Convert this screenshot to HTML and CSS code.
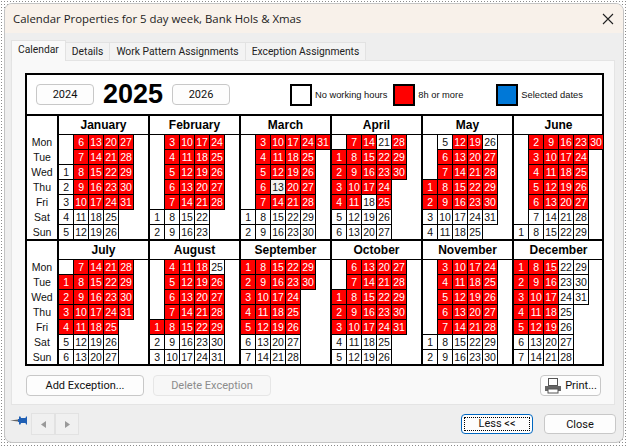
FILE: index.html
```html
<!DOCTYPE html>
<html lang="en">
<head>
    <meta charset="UTF-8">
    <title>Calendar Properties</title>
    <link rel="stylesheet" href="styles.css">
</head>
<body>
    <div class="window">
        <div class="titlebar">
            <span class="title">Calendar Properties for 5 day week, Bank Hols &amp; Xmas</span>
            <svg class="close-icon" width="12" height="12" viewBox="0 0 12 12"><path d="M1 1L11 11M11 1L1 11" stroke="#222" stroke-width="1.1" fill="none"/></svg>
        </div>

        <div class="tabs">
            <div class="tab active">Calendar</div>
            <div class="tab">Details</div>
            <div class="tab">Work Pattern Assignments</div>
            <div class="tab">Exception Assignments</div>
        </div>

        <div class="tab-page">
            <div class="calendar">
                <div class="cal-top">
                    <button class="btn year-btn">2024</button>
                    <div class="year">2025</div>
                    <button class="btn year-btn">2026</button>
                    <div class="legend">
                        <span class="swatch"></span><span class="legend-label label-none">No working hours</span>
                        <span class="swatch red"></span><span class="legend-label label-8h">8h or more</span>
                        <span class="swatch blue"></span><span class="legend-label">Selected dates</span>
                    </div>
                </div>
                <div class="year-grid" id="yearGrid"></div>
            </div>

            <div class="page-actions">
                <button class="btn action-btn">Add Exception...</button>
                <button class="btn action-btn disabled">Delete Exception</button>
                <button class="btn print-btn">
                    <svg width="18" height="17" viewBox="0 0 18 17">
                        <rect x="4.5" y="1.5" width="9" height="7" fill="#fff" stroke="#555"/>
                        <path d="M1 9h16v5H1z" fill="#666"/>
                        <rect x="4" y="12" width="10" height="4" fill="#fff" stroke="#555"/>
                    </svg>
                    Print...
                </button>
            </div>
        </div>

        <div class="footer">
            <svg class="pin" width="17" height="9" viewBox="0 0 17 9">
                <path d="M0 4.5L8 3.6V5.4z" fill="#666"/>
                <path d="M8 3h1V0.5h1.5L11 2h4.5L16 0.5h1V8.500h-1L15.500 7H11L10.500 8.500H9V6H8z" fill="#1f5fb4"/>
            </svg>
            <div class="nav-btns">
                <span class="nav-btn"><svg width="5" height="7" viewBox="0 0 5 7"><path d="M5 0V7L0 3.500z" fill="#999"/></svg></span>
                <span class="nav-btn"><svg width="5" height="7" viewBox="0 0 5 7"><path d="M0 0V7L5 3.500z" fill="#999"/></svg></span>
            </div>
            <button class="btn footer-btn focused"><span>Less &lt;&lt;</span></button>
            <button class="btn footer-btn">Close</button>
        </div>
    </div>

    <script src="calendar.js"></script>
</body>
</html>
```
FILE: styles.css
```css
* {
    box-sizing: border-box;
}
html, body {
    margin: 0;
    height: 100%;
}
body {
    width: 627px;
    height: 446px;
    overflow: hidden;
    padding: 3px 3px 3px 4px;
    background-color: #fff;
    background-image: radial-gradient(#8a8a8a 0.6px, transparent 0.7px);
    background-size: 3px 3px;
    font-family: "Liberation Sans", Arial, sans-serif;
    color: #000;
}
.window {
    height: 440px;
    background: #eeeeee;
    border: 1px solid #c4c4c4;
    border-radius: 8px;
    overflow: hidden;
}
.titlebar {
    height: 29px;
    background: #f8f1ea;
    display: flex;
    align-items: center;
    justify-content: space-between;
    padding: 0 9px 0 8px;
}
.title {
    font-family: "Open Sans", sans-serif;
    font-size: 11.400px;
    color: #1c1c1c;
}
.tabs {
    display: flex;
    align-items: flex-end;
    height: 27px;
    padding-left: 6px;
}
.tab {
    height: 18px;
    padding: 0 6px;
    background: #f3f3f3;
    border: 1px solid #e2e2e2;
    border-bottom: none;
    font-family: Roboto, sans-serif;
    font-size: 10.300px;
    line-height: 18px;
    color: #222;
    margin-right: -1px;
}
.tab.active {
    position: relative;
    z-index: 1;
    height: 21px;
    background: #f9f9f9;
    line-height: 18px;
    margin-bottom: -1px;
}
.tab-page {
    height: 345px;
    margin: 0 8px 0 6px;
    padding: 12px 0 0 13px;
    background: #f9f9f9;
    border: 1px solid #e4e4e4;
}
.calendar {
    width: 579px;
    height: 293px;
    background: #fff;
    border: 2px solid #000;
}
.cal-top {
    height: 41px;
    display: flex;
    align-items: center;
    padding: 0 0 0 9px;
    border-bottom: 2px solid #000;
}
.btn {
    font-family: Roboto, sans-serif;
    background: #fdfdfd;
    border: 1px solid #c8c8c8;
    border-radius: 4px;
    font-size: 11px;
    color: #111;
    padding: 0;
}
.year-btn {
    width: 58px;
    height: 21px;
}
.year {
    width: 78px;
    text-align: center;
    font-size: 27px;
    font-weight: bold;
}
.legend {
    display: flex;
    align-items: center;
    margin-left: 60px;
}
.swatch {
    width: 22px;
    height: 22px;
    border: 2px solid #000;
    background: #fff;
}
.swatch.red {
    background: #ff0000;
}
.swatch.blue {
    background: #0078d7;
}
.legend-label {
    font-size: 9.300px;
    margin-left: 3px;
    color: #111;
}
.label-none {
    margin-right: 6px;
}
.label-8h {
    margin-right: 33px;
}
.year-grid {
    display: grid;
    grid-template-columns: 30px repeat(6, 91px);
    grid-template-rows: 123px 125px;
}
.days {
    display: grid;
    grid-template-rows: repeat(7, 15px);
    padding-top: 19px;
    font-size: 10.500px;
    color: #111;
}
.days div {
    text-align: center;
    line-height: 15px;
}
.month {
    border-left: 2px solid #000;
}
.band-2 {
    border-top: 2px solid #000;
}
.month-name {
    height: 19px;
    border-bottom: 1px solid #000;
    text-align: center;
    font-size: 12px;
    font-weight: bold;
    line-height: 18px;
}
.cells {
    display: grid;
    grid-template-columns: repeat(6, 14px);
    grid-template-rows: repeat(7, 14px);
    gap: 1px;
    grid-auto-flow: column;
}
.cell {
    font-size: 10.500px;
    line-height: 14px;
    text-align: center;
    letter-spacing: -0.2px;
}
.cell.day {
    outline: 1px solid #000;
    background: #fff;
    color: #111;
}
.cell.work {
    background: #ff0000;
    color: #fff;
}
.cell.hover {
    background: #f0f0f0;
    color: #111;
}
.page-actions {
    display: flex;
    align-items: center;
    gap: 9px;
    margin-top: 9px;
    padding-left: 1px;
}
.action-btn {
    width: 118px;
    height: 21px;
}
.action-btn.disabled {
    background: #f7f7f7;
    border-color: #e6e6e6;
    color: #8c8c8c;
}
.print-btn {
    width: 61px;
    height: 21px;
    margin-left: 260px;
    display: flex;
    align-items: center;
    justify-content: center;
    gap: 3px;
}
.footer {
    display: flex;
    align-items: center;
    height: 38px;
    padding: 0 7px 0 5px;
}
.pin {
    margin-top: -7px;
}
.nav-btns {
    display: flex;
    margin-left: 4px;
}
.nav-btn {
    width: 24px;
    height: 22px;
    display: flex;
    align-items: center;
    justify-content: center;
    border: 1px solid #e2e2e2;
    background: #f0f0f0;
}
.footer-btn {
    width: 72px;
    height: 20px;
}
.footer-btn.focused {
    margin-left: auto;
    margin-right: 11px;
    border: 1px solid #0067c0;
    padding: 2px;
}
.footer-btn.focused span {
    display: block;
    height: 100%;
    border: 1px dotted #000;
    line-height: 12px;
}
```
FILE: calendar.js
```js
// 2025, weeks start on Monday. Weekdays listed here have no working hours.
const monthNames = ['January', 'February', 'March', 'April', 'May', 'June', 'July',
    'August', 'September', 'October', 'November', 'December'];
const dayNames = ['Mon', 'Tue', 'Wed', 'Thu', 'Fri', 'Sat', 'Sun'];
const holidays = {
    0: [1, 2, 3],
    2: [13],
    3: [18, 21],
    4: [5, 26],
    7: [25],
    11: [22, 23, 24, 25, 26, 29, 30, 31]
};

function dayLabels(band) {
    let html = `<div class="days ${band}">`;
    dayNames.forEach(name => { html += `<div>${name}</div>`; });
    return html + '</div>';
}

function monthHtml(month, band) {
    const offset = (new Date(2025, month, 1).getDay() + 6) % 7;
    const length = new Date(2025, month + 1, 0).getDate();
    const off = holidays[month] || [];
    let cells = '<div class="cell"></div>'.repeat(offset);
    for (let day = 1; day <= length; day++) {
        const weekday = (offset + day - 1) % 7;
        let cls = 'cell day';
        if (weekday < 5 && !off.includes(day)) cls += ' work';
        if (month === 2 && day === 13) cls += ' hover';
        cells += `<div class="${cls}">${day}</div>`;
    }
    return `<div class="month ${band}"><div class="month-name">${monthNames[month]}</div><div class="cells">${cells}</div></div>`;
}

let html = dayLabels('');
for (let m = 0; m < 6; m++) html += monthHtml(m, '');
html += dayLabels('band-2');
for (let m = 6; m < 12; m++) html += monthHtml(m, 'band-2');
document.getElementById('yearGrid').innerHTML = html;
```
